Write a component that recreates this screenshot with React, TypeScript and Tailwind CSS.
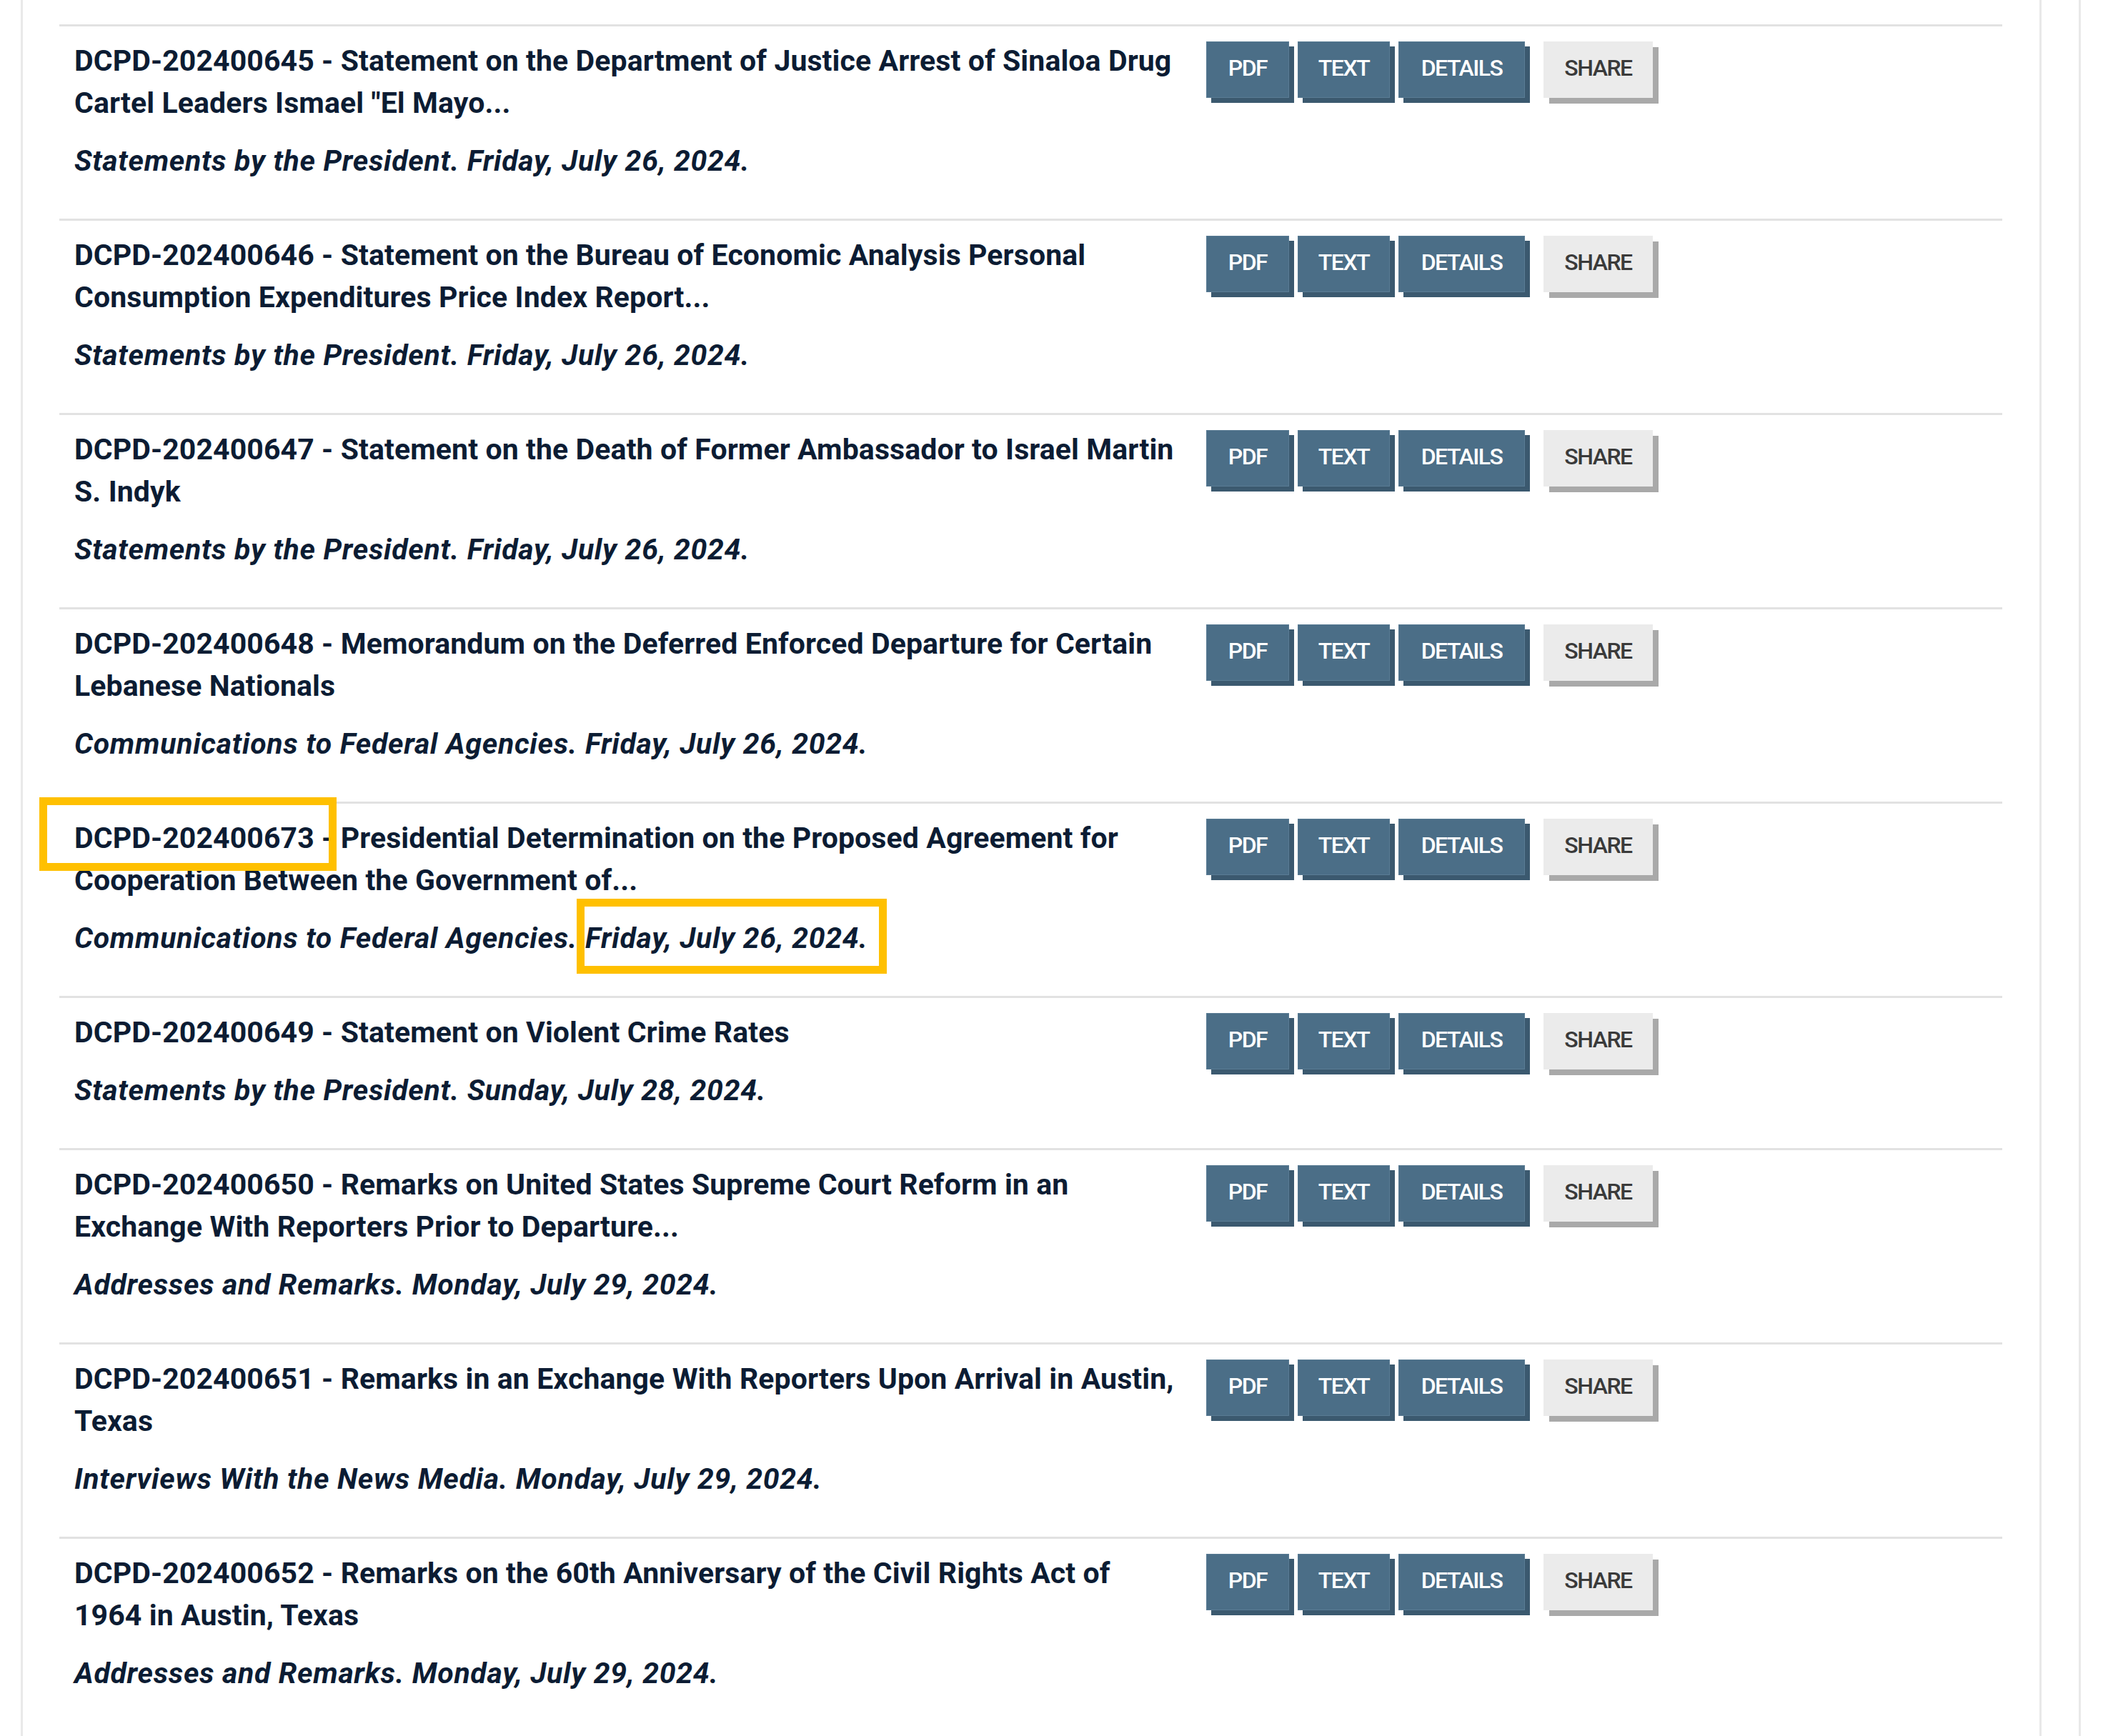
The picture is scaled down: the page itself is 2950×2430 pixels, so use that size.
import React from "react";

/* ── Types ── */
interface DocRow {
  id: string;
  title: string;
  category: string;
  date: string;
}

const rows: DocRow[] = [
  {
    id: "DCPD-202400645",
    title: "Statement on the Department of Justice Arrest of Sinaloa Drug\nCartel Leaders Ismael \"El Mayo...",
    category: "Statements by the President.",
    date: "Friday, July 26, 2024.",
  },
  {
    id: "DCPD-202400646",
    title: "Statement on the Bureau of Economic Analysis Personal\nConsumption Expenditures Price Index Report...",
    category: "Statements by the President.",
    date: "Friday, July 26, 2024.",
  },
  {
    id: "DCPD-202400647",
    title: "Statement on the Death of Former Ambassador to Israel Martin\nS. Indyk",
    category: "Statements by the President.",
    date: "Friday, July 26, 2024.",
  },
  {
    id: "DCPD-202400648",
    title: "Memorandum on the Deferred Enforced Departure for Certain\nLebanese Nationals",
    category: "Communications to Federal Agencies.",
    date: "Friday, July 26, 2024.",
  },
  {
    id: "DCPD-202400673",
    title: "Presidential Determination on the Proposed Agreement for\nCooperation Between the Government of...",
    category: "Communications to Federal Agencies.",
    date: "Friday, July 26, 2024.",
  },
  {
    id: "DCPD-202400649",
    title: "Statement on Violent Crime Rates",
    category: "Statements by the President.",
    date: "Sunday, July 28, 2024.",
  },
  {
    id: "DCPD-202400650",
    title: "Remarks on United States Supreme Court Reform in an\nExchange With Reporters Prior to Departure...",
    category: "Addresses and Remarks.",
    date: "Monday, July 29, 2024.",
  },
  {
    id: "DCPD-202400651",
    title: "Remarks in an Exchange With Reporters Upon Arrival in Austin,\nTexas",
    category: "Interviews With the News Media.",
    date: "Monday, July 29, 2024.",
  },
  {
    id: "DCPD-202400652",
    title: "Remarks on the 60th Anniversary of the Civil Rights Act of\n1964 in Austin, Texas",
    category: "Addresses and Remarks.",
    date: "Monday, July 29, 2024.",
  },
];

/* ── Action buttons ── */
const DarkButton: React.FC<{ label: string; width: string }> = ({ label, width }) => (
  <button
    className={`flex h-[79px] ${width} items-center justify-center border border-[#5a7c94] bg-[#4b6e87] pb-[6px] text-[32px] font-medium tracking-[-1.5px] text-white shadow-[7px_7px_0_#3b596f]`}
  >
    {label}
  </button>
);

function Actions() {
  return (
    <div className="ml-[20px] mt-[2px] flex items-start">
      <DarkButton label="PDF" width="w-[116px]" />
      <div className="w-[12px]" />
      <DarkButton label="TEXT" width="w-[129px]" />
      <div className="w-[12px]" />
      <DarkButton label="DETAILS" width="w-[177px]" />
      <button className="ml-[26px] flex h-[79px] w-[153px] items-center justify-center bg-[#ebebeb] pb-[6px] text-[32px] font-medium tracking-[-1.5px] text-[#3a3a3a] shadow-[8px_8px_0_#a9a9a9]">
        SHARE
      </button>
    </div>
  );
}

export default function App() {
  return (
    <div
      className="relative h-[2430px] w-[2950px] overflow-hidden bg-white text-[#0c1c33]"
      style={{ fontFamily: "Roboto, 'Liberation Sans', sans-serif" }}
    >
      <div className="flex h-full pl-[29px]">
        {/* ── Results panel ── */}
        <div className="h-full w-[2828px] border-x-[3px] border-[#e9e9e9] pl-[51px] pr-[52px] pt-[34px]">
          {rows.map((r) => (
            <div
              key={r.id}
              className="flex items-start border-t-[3px] border-[#e2e2e2] pb-[51px] pl-[21px] pt-[19px]"
            >
              <div className="w-[1564px] shrink-0">
                <p className="whitespace-pre-line text-[41px] font-bold leading-[59px] tracking-[0.1px]">
                  {`${r.id} - ${r.title}`}
                </p>
                <p className="mt-[22px] text-[41px] font-bold italic leading-[59px] tracking-[0.7px]">
                  {`${r.category} ${r.date}`}
                </p>
              </div>
              <Actions />
            </div>
          ))}
        </div>
        <div className="ml-[52px] h-full w-[3px] bg-[#e9e9e9]" />
      </div>

      {/* ── Highlight callouts ── */}
      <div className="absolute left-[55px] top-[1116px] h-[103px] w-[416px] border-[11px] border-[#ffc000]" />
      <div className="absolute left-[807px] top-[1258px] h-[105px] w-[434px] border-[11px] border-[#ffc000]" />
    </div>
  );
}
